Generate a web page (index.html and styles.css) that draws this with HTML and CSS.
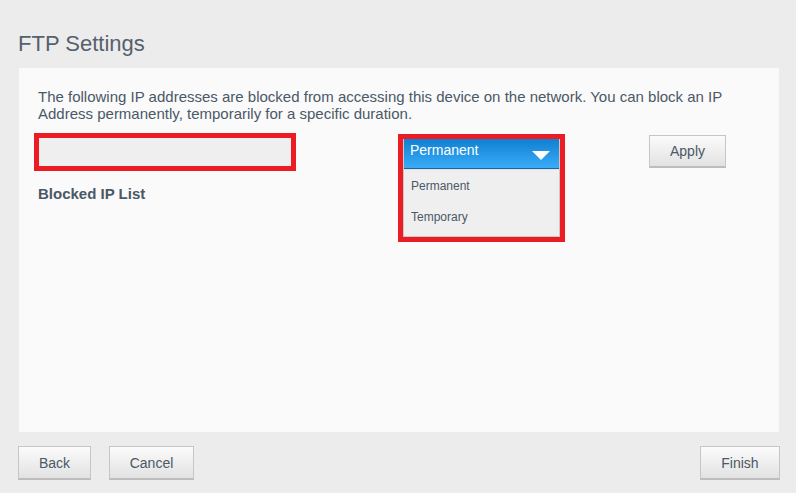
FILE: index.html
```html
<!DOCTYPE html>
<html lang="en">
  <head>
    <meta charset="UTF-8" />
    <title>FTP Settings</title>
    <link rel="stylesheet" href="styles.css">
  </head>
  <body>
    <div class="page">
      <h1 class="title">FTP Settings</h1>

      <div class="panel">
        <p class="intro">
          The following IP addresses are blocked from accessing this device on the network. You can block an IP
          Address permanently, temporarily for a specific duration.
        </p>

        <div class="block-row">
          <div class="ip-col">
            <div class="mark ip-mark">
              <input type="text" class="ip-input" />
            </div>
            <div class="list-label">Blocked IP List</div>
          </div>

          <div class="mark select-mark">
            <div class="select-box">
              <div class="select-head">
                <span>Permanent</span>
                <svg class="caret" width="18" height="9" viewBox="0 0 18 9">
                  <polygon points="0,0 18,0 9,9" fill="#ffffff" />
                </svg>
              </div>
              <ul class="select-list">
                <li>Permanent</li>
                <li>Temporary</li>
              </ul>
            </div>
          </div>

          <button type="button" class="btn apply-btn">Apply</button>
        </div>
      </div>

      <div class="footer">
        <button type="button" class="btn back-btn">Back</button>
        <button type="button" class="btn cancel-btn">Cancel</button>
        <span class="spacer"></span>
        <button type="button" class="btn finish-btn">Finish</button>
      </div>
    </div>
  </body>
</html>
```

FILE: styles.css
```css
* {
  box-sizing: border-box;
}

body {
  margin: 0;
  background-color: #ececec;
  font-family: "Liberation Sans", Arial, sans-serif;
  color: #4b5866;
}

.page {
  padding: 31px 16px 0 18px;
}

.title {
  margin: 0 0 11px 0;
  font-size: 22px;
  line-height: 26px;
  font-weight: normal;
  color: #56616c;
}

.panel {
  margin: 0 1px 0 1px;
  height: 364px;
  background-color: #fafafa;
  padding: 20px 19px 0 19px;
}

.intro {
  margin: 0;
  font-size: 15px;
  line-height: 17px;
}

.block-row {
  display: flex;
  align-items: flex-start;
  margin: 11px 0 0 -4px;
}

.mark {
  border: 5px solid #ec1c24;
}

.ip-col {
  width: 262px;
}

.ip-mark {
  height: 38px;
}

.ip-input {
  display: block;
  width: 100%;
  height: 100%;
  border: none;
  background-color: #efefef;
  outline: none;
}

.list-label {
  margin: 14px 0 0 4px;
  font-size: 15px;
  line-height: 17px;
  font-weight: bold;
}

.select-mark {
  margin: 1px 0 0 102px;
  width: 167px;
}

.select-box {
  border: 1px solid #c9c9c9;
  border-top: none;
  background-color: #efefef;
}

.select-head {
  display: flex;
  align-items: flex-start;
  justify-content: space-between;
  height: 30px;
  padding: 3px 9px 0 6px;
  background: linear-gradient(#0f80d2, #3aacf6);
  border-bottom: 1px solid #1766a6;
  color: #ffffff;
  font-size: 14px;
  line-height: 16px;
}

.caret {
  margin-top: 9px;
}

.select-list {
  list-style: none;
  margin: 0;
  padding: 1px 0 3px 0;
  border-top: 1px solid #e2e2e2;
  font-size: 12px;
}

.select-list li {
  height: 31px;
  line-height: 31px;
  padding-left: 7px;
}

.btn {
  font-family: "Liberation Sans", Arial, sans-serif;
  font-size: 14px;
  color: #4b5866;
  background: linear-gradient(#fbfbfb, #e2e2e2);
  border: 1px solid #c6c6c6;
  border-bottom: 2px solid #bdbdbd;
  padding: 0;
  cursor: pointer;
}

.apply-btn {
  margin: 2px 0 0 84px;
  width: 77px;
  height: 33px;
}

.footer {
  display: flex;
  margin-top: 14px;
}

.footer .btn {
  height: 34px;
}

.back-btn {
  width: 73px;
}

.cancel-btn {
  width: 85px;
  margin-left: 18px;
}

.spacer {
  flex: 1;
}

.finish-btn {
  width: 80px;
}
```
